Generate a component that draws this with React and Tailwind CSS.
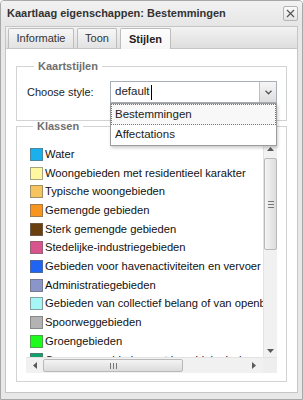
import React from "react";

const items = [
  ["#1ab0ec", "Water"],
  ["#fff8a0", "Woongebieden met residentieel karakter"],
  ["#f6c45e", "Typische woongebieden"],
  ["#f7951e", "Gemengde gebieden"],
  ["#6a3f10", "Sterk gemengde gebieden"],
  ["#d9548d", "Stedelijke-industriegebieden"],
  ["#1f64f2", "Gebieden voor havenactiviteiten en vervoer"],
  ["#8a95c9", "Administratiegebieden"],
  ["#a6f6f6", "Gebieden van collectief belang of van openbare diensten"],
  ["#b3b3b3", "Spoorweggebieden"],
  ["#1dfb1d", "Groengebieden"],
  ["#14a06e", "Overgangsgebieden met hoogbiologische waarde"],
];

function Tri({ dir }) {
  const pts = {
    up: "0,4 3.5,0 7,4",
    down: "0,0 3.5,4 7,0",
    left: "4,0 0,3.5 4,7",
    right: "0,0 4,3.5 0,7",
  }[dir];
  const w = dir === "up" || dir === "down" ? 7 : 4;
  const h = dir === "up" || dir === "down" ? 4 : 7;
  return (
    <svg width={w} height={h} viewBox={`0 0 ${w} ${h}`}>
      <polygon points={pts} fill="#5a5a5a" />
    </svg>
  );
}

export default function App() {
  return (
    <div className="w-[303px] h-[400px] bg-[#e8e8e8] border border-[#a8a8a8] rounded-t-[4px] flex flex-col overflow-hidden font-['Liberation_Sans',Arial,sans-serif]">
      {/* Title */}
      <div className="h-[25px] shrink-0 flex items-center justify-between pl-[6px] pr-[4px] bg-gradient-to-b from-[#f2f2f2] to-[#e6e6e6]">
        <span className="text-[11px] font-bold text-[#333]">Kaartlaag eigenschappen: Bestemmingen</span>
        <div className="w-[15px] h-[15px] border border-[#b4b4b4] rounded-[2px] bg-gradient-to-b from-[#fafafa] to-[#e4e4e4] flex items-center justify-center">
          <svg width="9" height="9" viewBox="0 0 9 9">
            <path d="M1 1 L8 8 M8 1 L1 8" stroke="#555" strokeWidth="1.2" />
          </svg>
        </div>
      </div>
      {/* Body */}
      <div className="flex-1 min-h-0 flex flex-col px-[4px] pb-[6px]">
        {/* Tab strip */}
        <div className="h-[22px] shrink-0 flex items-end gap-[3px] pl-[2px] border border-b-0 border-[#c6c6c6] bg-gradient-to-b from-[#f3f3f3] to-[#dedede]">
          <div className="h-[20px] w-[66px] flex items-center justify-center text-[11px] text-[#333] border border-b-0 border-[#bdbdbd] rounded-t-[2px] bg-gradient-to-b from-[#f7f7f7] to-[#e2e2e2]">
            Informatie
          </div>
          <div className="h-[20px] w-[40px] flex items-center justify-center text-[11px] text-[#333] border border-b-0 border-[#bdbdbd] rounded-t-[2px] bg-gradient-to-b from-[#f7f7f7] to-[#e2e2e2]">
            Toon
          </div>
          <div className="h-[21px] w-[51px] -mb-px relative flex items-center justify-center text-[11px] font-bold text-[#222] border border-b-0 border-[#bdbdbd] rounded-t-[2px] bg-gradient-to-b from-[#fdfdfd] to-[#f6f6f6]">
            Stijlen
          </div>
        </div>
        {/* Panel */}
        <div className="flex-1 min-w-0 bg-white border border-[#c6c6c6] px-[10px] pt-[10px]">
          <fieldset className="min-w-0 border border-[#d3d3d3] pl-[10px] pr-[9px] pt-[8px] pb-[17px]">
            <legend className="ml-[7px] px-[4px] text-[11px] leading-[14px] font-bold text-[#6f6f6f]">Kaartstijlen</legend>
            <div className="flex items-center">
              <span className="w-[83px] shrink-0 text-[11px] text-[#222]">Choose style:</span>
              <div className="relative flex-1 min-w-0">
                <div className="h-[22px] flex border border-[#a9aeb6] bg-white">
                  <div className="flex-1 flex items-center pl-[4px] text-[11.5px] text-[#222]">
                    default<span className="inline-block w-px h-[15px] bg-black ml-[1px]" />
                  </div>
                  <div className="w-[17px] border-l border-[#bfbfbf] bg-gradient-to-b from-[#f6f6f6] to-[#dedede] flex items-center justify-center">
                    <svg width="7" height="5" viewBox="0 0 7 5">
                      <path d="M0.5 0.8 L3.5 3.8 L6.5 0.8" fill="none" stroke="#555" strokeWidth="1.3" />
                    </svg>
                  </div>
                </div>
                <div className="absolute left-0 right-0 top-full z-10 bg-white border border-[#9c9c9c] shadow-[1px_2px_3px_rgba(0,0,0,0.2)]">
                  <div className="h-[21px] flex items-center pl-[3px] text-[11.5px] text-[#222] border border-dotted border-[#777] bg-[#f8f8f8]">
                    Bestemmingen
                  </div>
                  <div className="h-[20px] flex items-center pl-[4px] text-[11.5px] text-[#222]">
                    Affectations
                  </div>
                </div>
              </div>
            </div>
          </fieldset>
          <fieldset className="min-w-0 -mt-[2px] border border-[#d3d3d3] pl-[9px] pr-[9px] pt-[7px] pb-[8px]">
            <legend className="ml-[7px] px-[4px] text-[11px] leading-[14px] font-bold text-[#6f6f6f]">Klassen</legend>
            <div className="h-[233px] flex flex-col bg-white">
              <div className="flex-1 flex min-h-0">
                <div className="flex-1 min-w-0 overflow-hidden pt-[5px] pl-[4px]">
                  {items.map(([c, t]) => (
                    <div key={t} className="h-[18.7px] flex items-center whitespace-nowrap">
                      <span className="w-[13px] h-[13px] shrink-0 border border-[#6b6b6b]/60" style={{ backgroundColor: c }} />
                      <span className="ml-[2px] text-[11.2px] text-[#111]">{t}</span>
                    </div>
                  ))}
                </div>
                <div className="w-[14px] shrink-0 bg-[#f1f1f1] border-l border-[#e3e3e3] flex flex-col items-center">
                  <div className="h-[18px] flex items-center justify-center"><Tri dir="up" /></div>
                  <div className="w-[13px] h-[92px] border border-[#b9b9b9] rounded-[2px] bg-gradient-to-r from-[#f4f4f4] to-[#dcdcdc] flex flex-col items-center justify-center gap-[2px]">
                    <div className="w-[6px] h-px bg-[#777]" />
                    <div className="w-[6px] h-px bg-[#777]" />
                    <div className="w-[6px] h-px bg-[#777]" />
                  </div>
                  <div className="flex-1" />
                  <div className="h-[12px] flex items-center justify-center"><Tri dir="down" /></div>
                </div>
              </div>
              <div className="h-[16px] shrink-0 flex bg-[#f1f1f1] border-t border-[#e3e3e3]">
                <div className="flex-1 flex items-center">
                  <div className="w-[17px] flex items-center justify-center"><Tri dir="left" /></div>
                  <div className="w-[140px] h-[13px] border border-[#b9b9b9] rounded-[2px] bg-gradient-to-b from-[#f4f4f4] to-[#dcdcdc] flex items-center justify-center gap-[2px]">
                    <div className="w-px h-[6px] bg-[#777]" />
                    <div className="w-px h-[6px] bg-[#777]" />
                    <div className="w-px h-[6px] bg-[#777]" />
                  </div>
                  <div className="flex-1" />
                  <div className="w-[18px] flex items-center justify-center"><Tri dir="right" /></div>
                </div>
                <div className="w-[14px] bg-[#eeeeee]" />
              </div>
            </div>
          </fieldset>
        </div>
      </div>
    </div>
  );
}
